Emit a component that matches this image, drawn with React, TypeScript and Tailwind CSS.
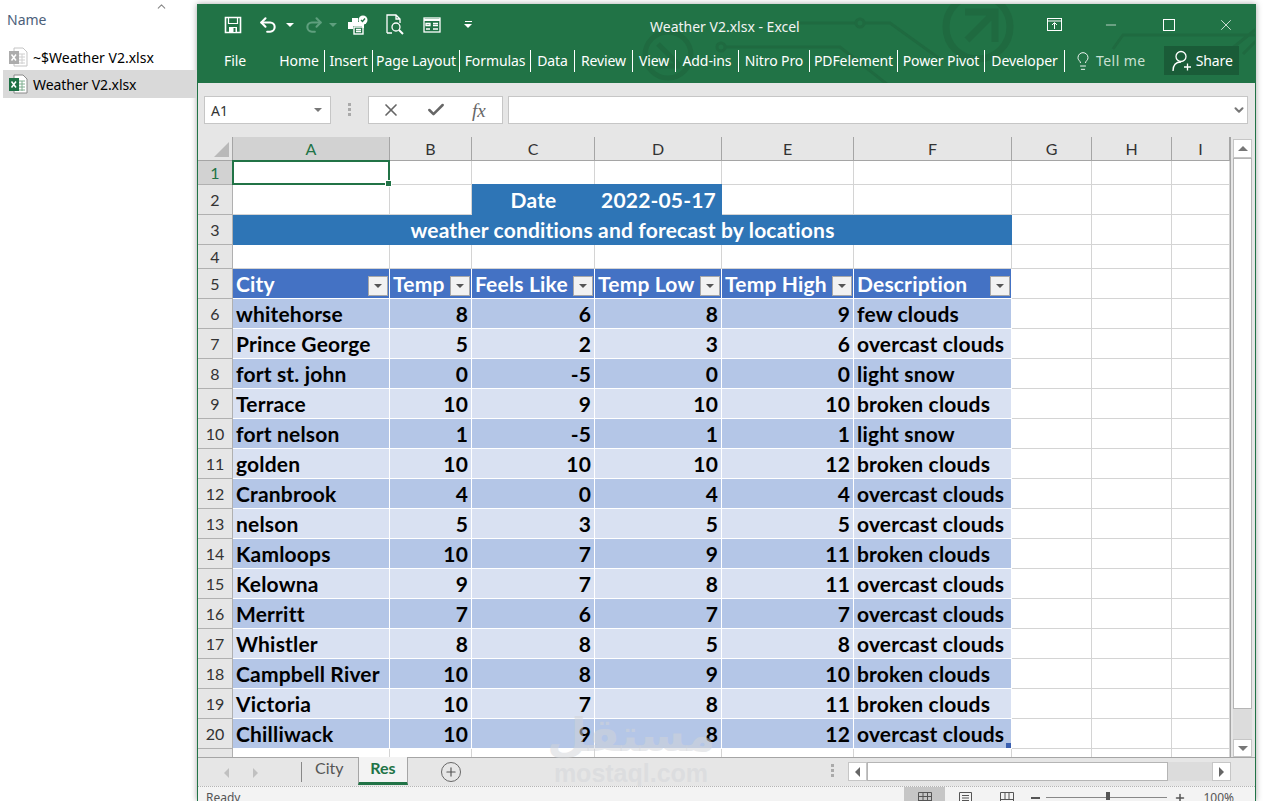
import { Check, ChevronDown, ChevronUp, Lightbulb, Minus, Plus, Redo2, Undo2, X } from 'lucide-react';

const uiFont = "font-['Noto_Sans','Open_Sans',sans-serif]";
const cellFont = "font-['Lato','Noto_Sans',sans-serif]";

const cities = [
  ['whitehorse', 8, 6, 8, 9, 'few clouds'],
  ['Prince George', 5, 2, 3, 6, 'overcast clouds'],
  ['fort st. john', 0, -5, 0, 0, 'light snow'],
  ['Terrace', 10, 9, 10, 10, 'broken clouds'],
  ['fort nelson', 1, -5, 1, 1, 'light snow'],
  ['golden', 10, 10, 10, 12, 'broken clouds'],
  ['Cranbrook', 4, 0, 4, 4, 'overcast clouds'],
  ['nelson', 5, 3, 5, 5, 'overcast clouds'],
  ['Kamloops', 10, 7, 9, 11, 'broken clouds'],
  ['Kelowna', 9, 7, 8, 11, 'overcast clouds'],
  ['Merritt', 7, 6, 7, 7, 'overcast clouds'],
  ['Whistler', 8, 8, 5, 8, 'overcast clouds'],
  ['Campbell River', 10, 8, 9, 10, 'broken clouds'],
  ['Victoria', 10, 7, 8, 11, 'broken clouds'],
  ['Chilliwack', 10, 9, 8, 12, 'overcast clouds'],
];

const tabs = [
  { label: 'Home', width: 'w-[51px]' },
  { label: 'Insert', width: 'w-[48px]' },
  { label: 'Page Layout', width: 'w-[87px]' },
  { label: 'Formulas', width: 'w-[71px]' },
  { label: 'Data', width: 'w-[44px]' },
  { label: 'Review', width: 'w-[58px]' },
  { label: 'View', width: 'w-[43px]' },
  { label: 'Add-ins', width: 'w-[63px]' },
  { label: 'Nitro Pro', width: 'w-[71px]' },
  { label: 'PDFelement', width: 'w-[88px]' },
  { label: 'Power Pivot', width: 'w-[87px]' },
  { label: 'Developer', width: 'w-[80px]' },
];

function XlsIcon({ faded }: { faded?: boolean }) {
  return (
    <svg width="20" height="20" viewBox="0 0 20 20" className={faded ? 'opacity-50 grayscale' : ''}>
      <path d="M6 1h9l4 4v14H6z" fill="#fff" stroke="#8a8a8a" />
      <path d="M11 7h6M11 10h6M11 13h6M11 16h6M14 7v10" stroke="#7fae8f" />
      <rect x="1" y="4" width="10" height="13" fill="#1e7145" />
      <path d="M3.500 7.500l4.500 6M8 7.500l-4.500 6" stroke="#fff" strokeWidth="1.5" />
    </svg>
  );
}

function ColHead({ label, active }: { label: string; active?: boolean }) {
  return (
    <div
      className={`h-[24px] flex items-center justify-center border-r border-b border-[#a5a5a5] text-[16px] ${
        active ? 'bg-[#d2d2d2] text-[#217346]' : 'bg-[#e6e6e6] text-[#333]'
      }`}
    >
      {label}
    </div>
  );
}

function RowHead({ n, h, active }: { n: number; h: string; active?: boolean }) {
  return (
    <div
      className={`${h} flex items-center justify-center border-r border-b border-[#b0b0b0] text-[16px] pt-[1px] ${
        active ? 'bg-[#d2d2d2] text-[#217346]' : 'bg-[#e6e6e6] text-[#333]'
      }`}
    >
      {n}
    </div>
  );
}

function Blank({ h }: { h: string }) {
  return <div className={`${h} border-r border-b border-[#d4d4d4] bg-white`} />;
}

function HeaderCell({ label }: { label: string }) {
  return (
    <div className="h-[30px] flex items-center justify-between bg-[#4472c4] border-r border-b border-white pl-[3px] pr-[1px] pt-[1px] text-white text-[21px] font-bold tracking-[0.18px]">
      <span className="whitespace-nowrap">{label}</span>
      <span className="w-[20px] h-[20px] mt-[3px] shrink-0 flex items-center justify-center bg-[#f2f2f2] border border-[#a8a8a8]">
        <span className="border-x-[4px] border-x-transparent border-t-[4px] border-t-[#555]" />
      </span>
    </div>
  );
}

function Sheet() {
  return (
    <div className={`relative h-[620px] overflow-hidden grid grid-cols-[35px_157px_82px_123px_127px_132px_158px_80px_80px_58px] content-start ${cellFont}`}>
      {/* header row */}
      <div className="h-[24px] bg-[#e6e6e6] border-r border-b border-[#a5a5a5] flex items-end justify-end pr-[3px] pb-[3px]">
        <span className="border-l-[15px] border-l-transparent border-b-[15px] border-b-[#b9b9b9]" />
      </div>
      <ColHead label="A" active />
      {['B', 'C', 'D', 'E', 'F', 'G', 'H', 'I'].map((c) => (
        <ColHead key={c} label={c} />
      ))}

      {/* row 1 */}
      <RowHead n={1} h="h-[24px]" active />
      <div className="relative h-[25px] -mt-[1px] -ml-[1px] border-2 border-[#217346] bg-white z-10">
        <span className="absolute -right-[4px] -bottom-[4px] w-[5px] h-[5px] bg-[#217346] border border-white box-content" />
      </div>
      {[0, 1, 2, 3, 4, 5, 6, 7].map((i) => (
        <Blank key={i} h="h-[24px]" />
      ))}

      {/* row 2 */}
      <RowHead n={2} h="h-[30px]" />
      <Blank h="h-[30px]" />
      <Blank h="h-[30px]" />
      <div className="h-[31px] -mt-[1px] bg-[#2e75b6] text-white text-[21px] font-bold tracking-[0.18px] flex items-center justify-center">Date</div>
      <div className="h-[31px] -mt-[1px] bg-[#2e75b6] text-white text-[21px] font-bold tracking-[0.18px] flex items-center justify-center">2022-05-17</div>
      <Blank h="h-[30px]" />
      <Blank h="h-[30px]" />
      <Blank h="h-[30px]" />
      <Blank h="h-[30px]" />
      <Blank h="h-[30px]" />

      {/* row 3 */}
      <RowHead n={3} h="h-[30px]" />
      <div className="col-span-6 h-[30px] pb-[1px] bg-[#2e75b6] text-white text-[21px] font-bold tracking-[0.18px] flex items-center justify-center">
        weather conditions and forecast by locations
      </div>
      <Blank h="h-[30px]" />
      <Blank h="h-[30px]" />
      <Blank h="h-[30px]" />

      {/* row 4 */}
      <RowHead n={4} h="h-[24px]" />
      {[0, 1, 2, 3, 4, 5, 6, 7, 8].map((i) => (
        <Blank key={i} h="h-[24px]" />
      ))}

      {/* row 5 */}
      <RowHead n={5} h="h-[30px]" />
      {['City', 'Temp', 'Feels Like', 'Temp Low', 'Temp High', 'Description'].map((l) => (
        <HeaderCell key={l} label={l} />
      ))}
      <Blank h="h-[30px]" />
      <Blank h="h-[30px]" />
      <Blank h="h-[30px]" />

      {/* data */}
      {cities.map((row, i) => {
        const bg = i % 2 === 0 ? 'bg-[#b4c6e7]' : 'bg-[#d9e1f2]';
        return [
          <RowHead key={`h${i}`} n={i + 6} h="h-[30px]" />,
          ...row.map((v, j) => (
            <div
              key={`${i}-${j}`}
              className={`relative h-[30px] flex items-center px-[3px] border-r border-b border-white text-[21px] font-bold tracking-[0.18px] text-black whitespace-nowrap ${bg} ${
                typeof v === 'number' ? 'justify-end' : ''
              }`}
            >
              {v}
              {i === 14 && j === 5 && <span className="absolute right-0 bottom-0 w-[5px] h-[5px] bg-[#3a5fb0]" />}
            </div>
          )),
          <Blank key={`g${i}`} h="h-[30px]" />,
          <Blank key={`k${i}`} h="h-[30px]" />,
          <Blank key={`l${i}`} h="h-[30px]" />,
        ];
      })}

      {/* row 21, cut off by the tab bar */}
      <RowHead n={21} h="h-[30px]" />
      {[0, 1, 2, 3, 4, 5, 6, 7, 8].map((i) => (
        <Blank key={i} h="h-[30px]" />
      ))}
    </div>
  );
}

function VScroll() {
  return (
    <div className="w-[25px] h-[620px] pl-[2px] pr-[3px] pt-[2px] flex flex-col bg-[#e6e6e6] border-l border-[#a5a5a5]">
      <div className="h-[19px] bg-white border border-[#c6c6c6] flex items-center justify-center">
        <span className="border-x-[5px] border-x-transparent border-b-[5px] border-b-[#777]" />
      </div>
      <div className="h-[551px] bg-white border border-[#b5b5b5]" />
      <div className="flex-1 bg-[#dcdcdc]" />
      <div className="h-[18px] bg-white border border-[#c6c6c6] flex items-center justify-center">
        <span className="border-x-[5px] border-x-transparent border-t-[5px] border-t-[#777]" />
      </div>
    </div>
  );
}

export default function App() {
  return (
    <div className={`h-[801px] w-[1263px] overflow-hidden bg-white flex relative ${uiFont}`}>
      {/* file explorer */}
      <div className="w-[197px] shrink-0 relative pt-[10px] text-[14px] text-black">
        <ChevronUp className="absolute left-[155px] top-[0px] text-[#888]" size={13} />
        <div className="pl-[7px] h-[20px] leading-[20px] text-[#4c607a]">Name</div>
        <div className="mt-[14px] h-[26px] flex items-center gap-[5px] pl-[8px]">
          <XlsIcon faded />
          <span>~$Weather V2.xlsx</span>
        </div>
        <div className="ml-[3px] h-[28px] flex items-center gap-[5px] pl-[5px] bg-[#d9d9d9] tracking-[-0.1px]">
          <XlsIcon />
          <span>Weather V2.xlsx</span>
        </div>
      </div>

      {/* excel window */}
      <div className="mt-[4px] w-[1059px] h-[797px] shrink-0 flex flex-col border-x border-[#217346] bg-[#e6e6e6] shadow-[0_0_6px_rgba(0,0,0,0.35)]">
        {/* title + ribbon tabs */}
        <div className="relative h-[79px] bg-[#217346] text-white overflow-hidden">
          <svg className="absolute inset-0" width="1057" height="79" fill="none" stroke="#1f6a40" strokeWidth="3">
            <circle cx="780" cy="23" r="32" strokeWidth="7" />
            <path d="M769 36l28-28M767 8h30v30" strokeWidth="7" />
            <circle cx="470" cy="51" r="23" strokeWidth="5" />
            <path d="M482 62l-22-22M460 62h22" strokeWidth="5" />
            <path d="M523 43H642L690 81M600 19H692L742 55M915 45l10-14h132M1027 50l55-44M1045 50l30-30" />
            <circle cx="662" cy="19" r="4" fill="#217346" />
            <circle cx="523" cy="43" r="4" fill="#217346" />
          </svg>
          <div className="relative h-[41px] flex items-center">
            <svg width="18" height="18" viewBox="0 0 18 18" className="ml-[26px]" fill="none" stroke="#fff" strokeWidth="1.6">
              <path d="M1.500 1.500h15v15h-15z" />
              <path d="M4.500 1.500v6h9v-6" strokeWidth="1.200" />
              <path d="M5 11h8v5.500H5z" fill="#fff" stroke="none" />
              <path d="M9.500 12h2v4h-2z" fill="#217346" stroke="none" />
            </svg>
            <Undo2 size={20} className="ml-[16px]" strokeWidth={2.5} />
            <span className="ml-[8px] border-x-[4px] border-x-transparent border-t-[4px] border-t-white" />
            <Redo2 size={20} className="ml-[10px] text-[#5f9f7e]" strokeWidth={2.5} />
            <span className="ml-[5px] border-x-[4px] border-x-transparent border-t-[4px] border-t-[#5f9f7e]" />
            <svg width="22" height="20" viewBox="0 0 22 20" className="ml-[10px]" fill="none" stroke="#fff" strokeWidth="1.4">
              <path d="M5 3h6v4h6v6h-2v-2H6v3H1V7h4z" fill="#fff" stroke="none" />
              <rect x="7" y="12" width="9" height="7" fill="#217346" />
              <path d="M9 14.500h5M9 16.500h5" />
              <circle cx="16" cy="5" r="4.500" fill="#fff" stroke="none" />
              <path d="M14 5l1.500 1.500L18 3.500" stroke="#217346" />
            </svg>
            <svg width="20" height="22" viewBox="0 0 20 22" className="ml-[16px]" fill="none" stroke="#fff" strokeWidth="1.3">
              <path d="M2 19V1h9l4 4v4M2 19h5M11 1v4h4" />
              <circle cx="11" cy="13" r="4" />
              <path d="M14 16l4 4" strokeWidth="2" />
            </svg>
            <svg width="18" height="16" viewBox="0 0 18 16" className="ml-[18px]" fill="none" stroke="#fff" strokeWidth="1.3">
              <rect x="1" y="1" width="16" height="14" />
              <path d="M1 3h16" strokeWidth="2" />
              <path d="M3 6.500h4v2H3zM10 6.500h5M10 8.500h5M3 12h4M10 12h5" />
            </svg>
            <span className="ml-[23px] flex flex-col items-center gap-[2px]">
              <span className="w-[7px] h-[1px] bg-white" />
              <span className="border-x-[4px] border-x-transparent border-t-[4px] border-t-white" />
            </span>
            <span className="absolute left-[452px] top-[13px] text-[14px] leading-[20px] text-[#f3f3f3]">Weather V2.xlsx - Excel</span>
            <div className="ml-auto flex items-center pr-[20px]">
              <svg width="15" height="13" viewBox="0 0 15 13" fill="none" stroke="#fff">
                <rect x="0.500" y="0.500" width="14" height="12" />
                <path d="M0.500 3h14M7.500 11V5M5 7l2.500-2.500L10 7" />
              </svg>
              <Minus size={16} className="ml-[41px]" strokeWidth={1} />
              <span className="ml-[44px] w-[12px] h-[12px] border border-white" />
              <X size={18} className="ml-[42px]" strokeWidth={1} />
            </div>
          </div>
          <div className="relative h-[38px] flex items-start text-[14px] leading-[20px] tracking-[-0.1px]">
            <span className="w-[76px] pl-[26px] pt-[6px]">File</span>
            <div className="flex mt-[5px]">
              {tabs.map((t) => (
                <span key={t.label} className={`${t.width} h-[22px] flex items-center justify-center border-r border-white whitespace-nowrap`}>
                  {t.label}
                </span>
              ))}
            </div>
            <Lightbulb size={20} className="ml-[8px] mt-[6px] text-[#eef5f1]" strokeWidth={1.2} />
            <span className="ml-[3px] mt-[6px] text-[#c9e0d3] whitespace-nowrap tracking-[0.45px]">Tell me</span>
            <span className="ml-[18px] mt-[1px] w-[75px] h-[29px] flex items-center pl-[8px] gap-[4px] bg-[#1a5c38]">
              <svg width="20" height="22" viewBox="0 0 20 22" fill="none" stroke="#fff" strokeWidth="1.3">
                <circle cx="9" cy="6.500" r="5" />
                <path d="M1 21c0-6 3-9 8-9M12 17h7M15.500 13.500v7" />
              </svg>
              Share
            </span>
          </div>
        </div>

        {/* formula bar */}
        <div className="h-[54px] flex items-start pt-[13px] pl-[6px] bg-[#e6e6e6]">
          <div className="w-[127px] h-[28px] bg-white border border-[#c6c6c6] flex items-center justify-between pl-[6px] pr-[8px] text-[14px] text-[#333]">
            A1
            <span className="border-x-[4px] border-x-transparent border-t-[4px] border-t-[#777]" />
          </div>
          <div className="ml-[17px] mr-[17px] mt-[7px] flex flex-col gap-[2px]">
            <span className="w-[3px] h-[3px] bg-[#aaa]" />
            <span className="w-[3px] h-[3px] bg-[#aaa]" />
            <span className="w-[3px] h-[3px] bg-[#aaa]" />
          </div>
          <div className="w-[135px] h-[28px] bg-white border border-[#c6c6c6] flex items-center text-[#666]">
            <X size={20} className="ml-[12px]" strokeWidth={2} />
            <Check size={20} className="ml-[25px]" strokeWidth={3} />
            <span className="ml-[26px] font-['Liberation_Serif',serif] italic text-[19px] leading-none">fx</span>
          </div>
          <div className="ml-[5px] w-[740px] h-[28px] bg-white border border-[#c6c6c6] flex items-center justify-end pr-[1px]">
            <ChevronDown size={14} strokeWidth={3.5} className="text-[#777]" />
          </div>
        </div>

        {/* sheet */}
        <div className="flex">
          <Sheet />
          <VScroll />
        </div>

        {/* sheet tabs + h scroll */}
        <div className="h-[29px] flex items-start bg-[#e6e6e6] border-t border-[#a5a5a5] text-[#555]">
          <span className="ml-[26px] mt-[10px] border-y-[5px] border-y-transparent border-r-[5px] border-r-[#c0c0c0]" />
          <span className="ml-[24px] mt-[10px] border-y-[5px] border-y-transparent border-l-[5px] border-l-[#c0c0c0]" />
          <span className="ml-[43px] mt-[4px] w-[1px] h-[20px] bg-[#888]" />
          <span className="ml-[13px] -mt-[1px] text-[16px] leading-[22px] font-['Lato',sans-serif] w-[43px]">City</span>
          <span className="w-[50px] h-[28px] -mt-[1px] flex justify-center bg-[#f3f3f3] border-x border-[#a5a5a5] border-b-[3px] border-b-[#217346] text-[#217346] font-bold text-[16px] leading-[22px] font-['Lato',sans-serif]">
            Res
          </span>
          <span className="ml-[33px] mt-[4px] w-[20px] h-[20px] rounded-full border border-[#666] flex items-center justify-center">
            <Plus size={14} strokeWidth={2} />
          </span>
          <div className="ml-[370px] mt-[6px] flex flex-col gap-[2px]">
            <span className="w-[3px] h-[3px] bg-[#aaa]" />
            <span className="w-[3px] h-[3px] bg-[#aaa]" />
            <span className="w-[3px] h-[3px] bg-[#aaa]" />
          </div>
          <div className="ml-[14px] mt-[4px] w-[383px] h-[19px] flex bg-[#dcdcdc]">
            <span className="w-[19px] bg-white border border-[#c6c6c6] flex items-center justify-center">
              <span className="border-y-[5px] border-y-transparent border-r-[5px] border-r-[#666]" />
            </span>
            <span className="w-[301px] bg-white border border-[#b5b5b5]" />
            <span className="flex-1" />
            <span className="w-[19px] bg-white border border-[#c6c6c6] flex items-center justify-center">
              <span className="border-y-[5px] border-y-transparent border-l-[5px] border-l-[#666]" />
            </span>
          </div>
        </div>

        {/* status bar */}
        <div className="h-[15px] flex items-start bg-[#f3f3f3] border-t border-dotted border-[#b5b5b5] text-[12px] leading-[20px] text-[#555] overflow-hidden">
          <span className="ml-[8px] mt-[1px]">Ready</span>
          <span className="ml-[664px] w-[41px] h-[15px] bg-[#c6c6c6] flex justify-center pt-[5px]">
            <svg width="14" height="12" viewBox="0 0 14 12" fill="none" stroke="#555">
              <path d="M.5.5h13v11H.5zM.5 4.500h13M.5 8.500h13M5 .5v11M9.500.5v11" />
            </svg>
          </span>
          <svg width="13" height="12" viewBox="0 0 13 12" fill="none" stroke="#555" className="ml-[14px] mt-[5px]">
            <path d="M.5.5h12v11H.5zM3 3.500h7M3 6h7M3 8.500h7" />
          </svg>
          <svg width="14" height="12" viewBox="0 0 14 12" fill="none" stroke="#555" className="ml-[28px] mt-[5px]">
            <path d="M.5 11.500V.5h13v11M5 .5v7M9 .5v7M.5 7.500h13" />
          </svg>
          <span className="ml-[17px] mt-[10px] w-[9px] h-[2px] bg-[#555]" />
          <span className="relative ml-[6px] mt-[10px] w-[121px] h-[1px] bg-[#888]">
            <span className="absolute left-[60px] -top-[5px] w-[4px] h-[8px] bg-[#555]" />
          </span>
          <Plus size={12} className="ml-[7px] mt-[5px]" strokeWidth={3} />
          <span className="ml-[17px] mt-[1px]">100%</span>
        </div>
      </div>

      {/* watermark */}
      <div className="absolute left-[552px] top-[710px] w-[158px] flex flex-col items-center text-[#d2d4d8]/50 pointer-events-none">
        <span className="font-['DejaVu_Sans',sans-serif] font-bold text-[46px] leading-[50px]">مستقل</span>
        <span className="font-['Liberation_Sans',sans-serif] font-bold text-[25px] leading-[26px] whitespace-nowrap">mostaql.com</span>
      </div>
    </div>
  );
}
